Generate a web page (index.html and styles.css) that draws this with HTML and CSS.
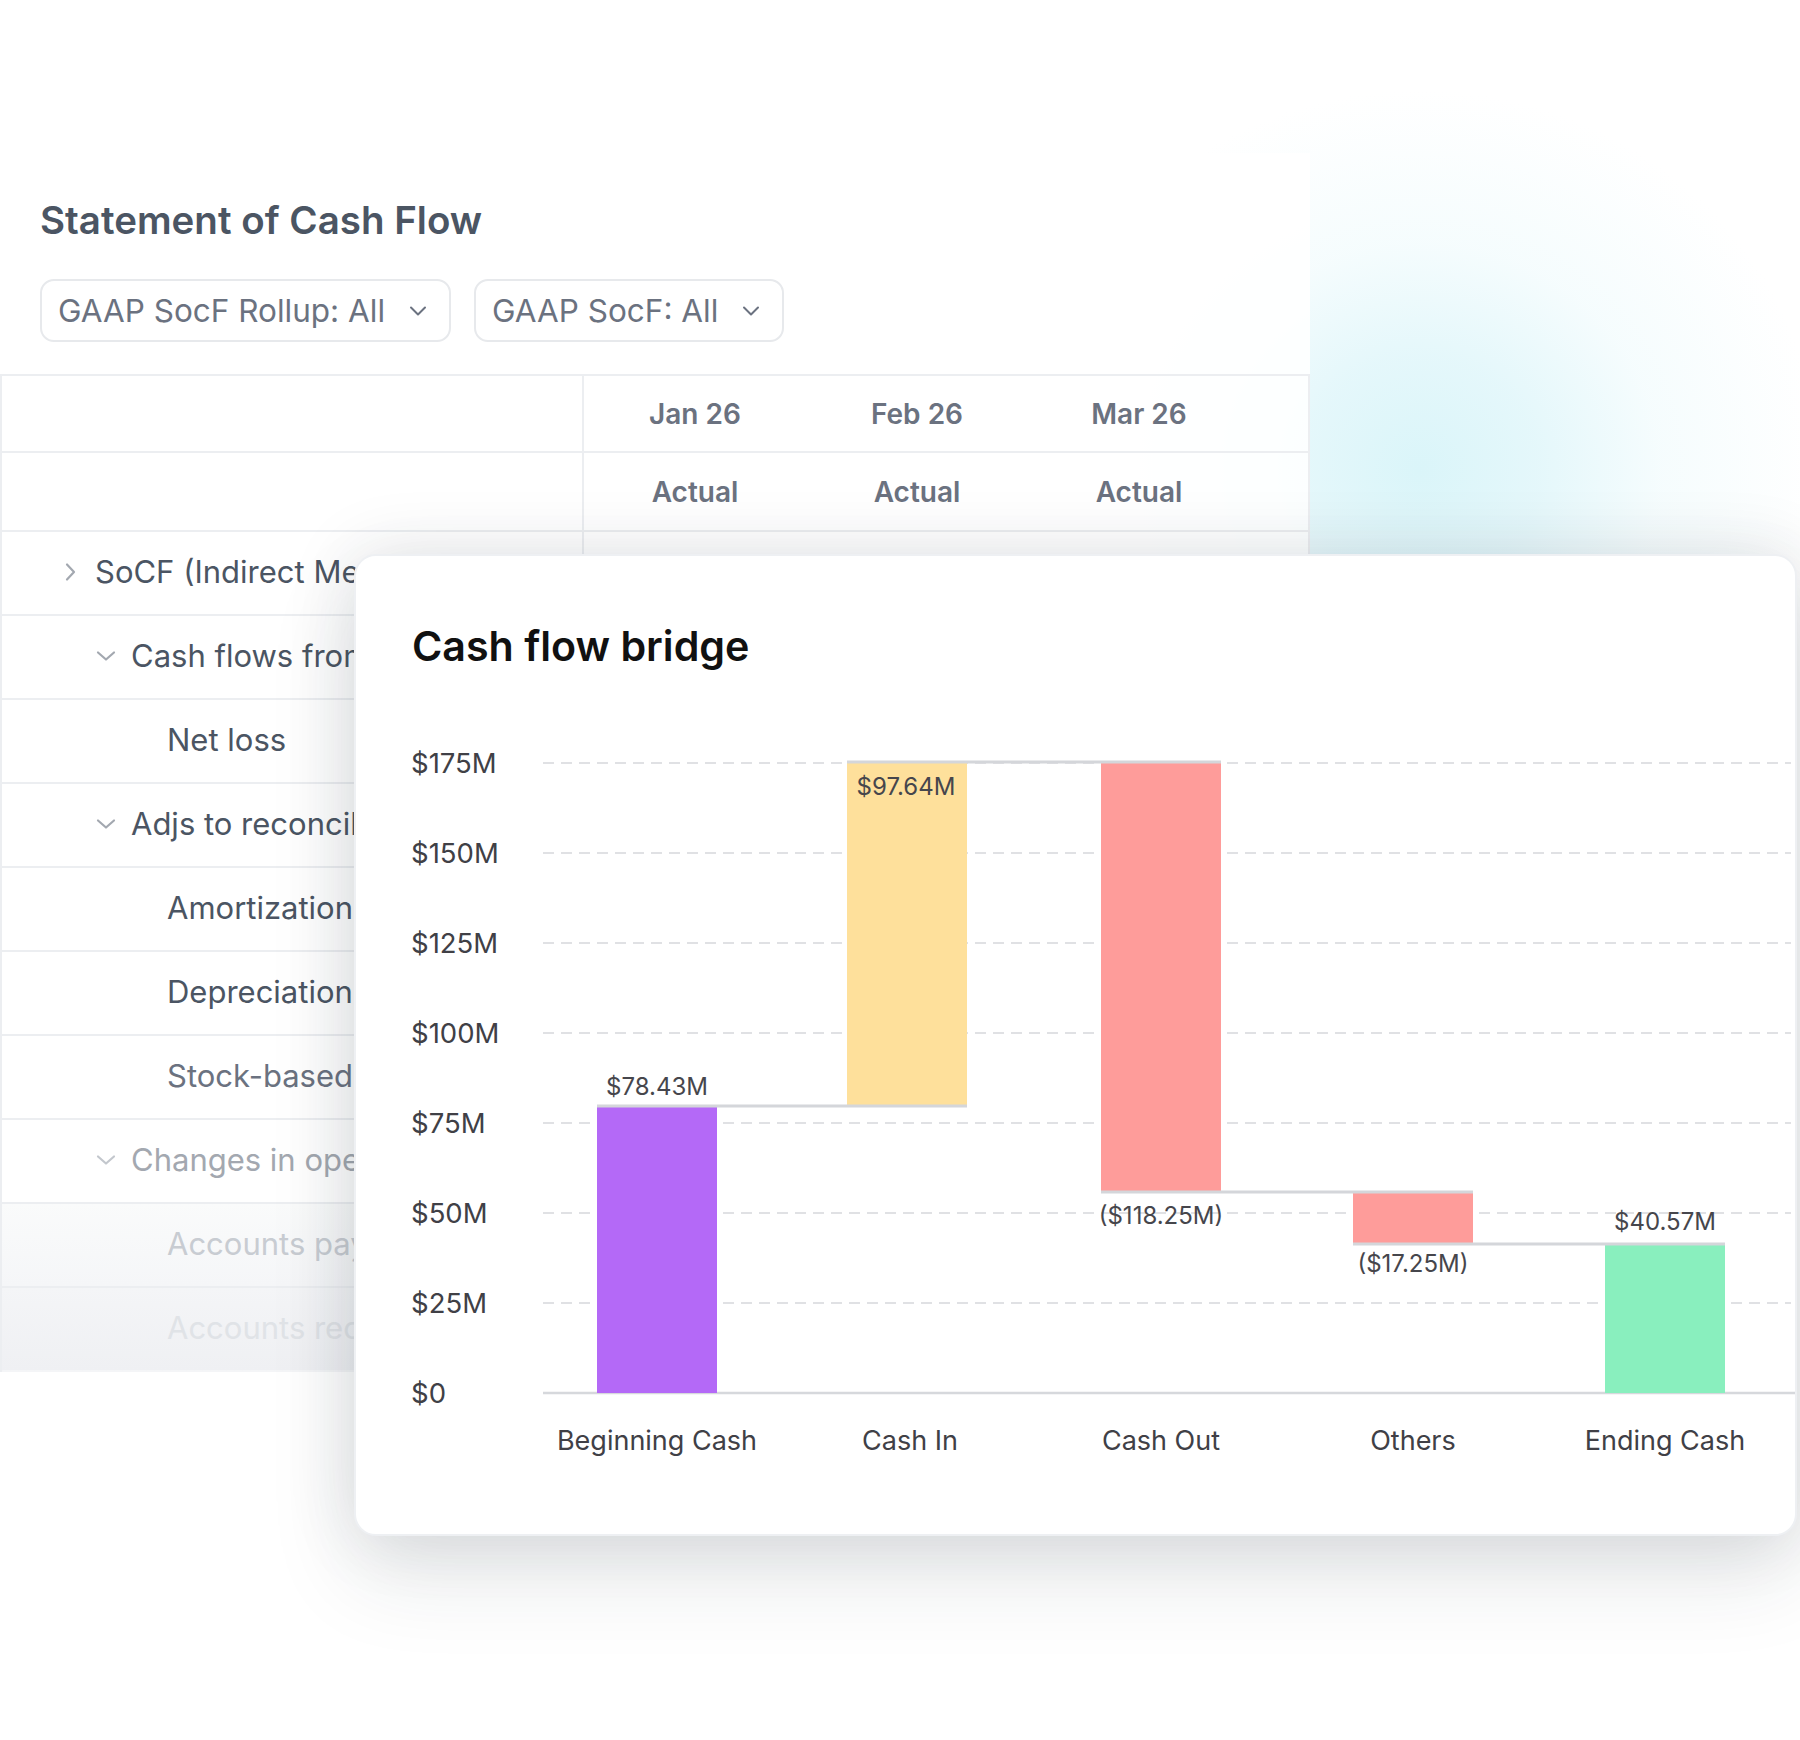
FILE: index.html
```html
<!DOCTYPE html>
<html lang="en">
<head>
<meta charset="utf-8">
<title>Statement of Cash Flow</title>
<link rel="stylesheet" href="styles.css">
</head>
<body>
<div class="stage">
  <div class="glow"></div>

  <section class="panel">
    <h1 class="title">Statement of Cash Flow</h1>
    <div class="filters">
      <div class="select">
        <span>GAAP SocF Rollup: All</span>
        <svg class="sel-chev" width="18" height="12" viewBox="0 0 18 12"><path d="M2 2.5 L9 9.5 L16 2.5" fill="none" stroke="#6b7280" stroke-width="2" stroke-linecap="round" stroke-linejoin="round"/></svg>
      </div>
      <div class="select">
        <span>GAAP SocF: All</span>
        <svg class="sel-chev" width="18" height="12" viewBox="0 0 18 12"><path d="M2 2.5 L9 9.5 L16 2.5" fill="none" stroke="#6b7280" stroke-width="2" stroke-linecap="round" stroke-linejoin="round"/></svg>
      </div>
    </div>

    <div class="table">
      <div class="row head1">
        <div class="cell label"></div>
        <div class="cell month">Jan 26</div>
        <div class="cell month">Feb 26</div>
        <div class="cell month">Mar 26</div>
        <div class="cell"></div>
      </div>
      <div class="row head2">
        <div class="cell label"></div>
        <div class="cell month">Actual</div>
        <div class="cell month">Actual</div>
        <div class="cell month">Actual</div>
        <div class="cell"></div>
      </div>

      <div class="row body">
        <div class="cell label lvl0">
          <svg class="chev" width="20" height="20" viewBox="0 0 20 20"><path d="M7 2.5 L14 10 L7 17.5" fill="none" stroke="#a3a8b0" stroke-width="2.2" stroke-linecap="round" stroke-linejoin="round"/></svg>
          <span>SoCF (Indirect Method)</span>
        </div>
        <div class="cell"></div><div class="cell"></div><div class="cell"></div><div class="cell"></div>
      </div>
      <div class="row body">
        <div class="cell label lvl1">
          <svg class="chev" width="20" height="20" viewBox="0 0 20 20"><path d="M2 6.5 L10 13.5 L18 6.5" fill="none" stroke="#a3a8b0" stroke-width="2.2" stroke-linecap="round" stroke-linejoin="round"/></svg>
          <span>Cash flows from operating activities</span>
        </div>
        <div class="cell"></div><div class="cell"></div><div class="cell"></div><div class="cell"></div>
      </div>
      <div class="row body">
        <div class="cell label lvl2"><span>Net loss</span></div>
        <div class="cell"></div><div class="cell"></div><div class="cell"></div><div class="cell"></div>
      </div>
      <div class="row body">
        <div class="cell label lvl1">
          <svg class="chev" width="20" height="20" viewBox="0 0 20 20"><path d="M2 6.5 L10 13.5 L18 6.5" fill="none" stroke="#a3a8b0" stroke-width="2.2" stroke-linecap="round" stroke-linejoin="round"/></svg>
          <span>Adjs to reconcile net loss</span>
        </div>
        <div class="cell"></div><div class="cell"></div><div class="cell"></div><div class="cell"></div>
      </div>
      <div class="row body">
        <div class="cell label lvl2"><span>Amortization</span></div>
        <div class="cell"></div><div class="cell"></div><div class="cell"></div><div class="cell"></div>
      </div>
      <div class="row body">
        <div class="cell label lvl2"><span>Depreciation</span></div>
        <div class="cell"></div><div class="cell"></div><div class="cell"></div><div class="cell"></div>
      </div>
      <div class="row body fade1">
        <div class="cell label lvl2"><span>Stock-based compensation</span></div>
        <div class="cell"></div><div class="cell"></div><div class="cell"></div><div class="cell"></div>
      </div>
      <div class="row body fade2">
        <div class="cell label lvl1">
          <svg class="chev" width="20" height="20" viewBox="0 0 20 20"><path d="M2 6.5 L10 13.5 L18 6.5" fill="none" stroke="#c3c7cd" stroke-width="2.2" stroke-linecap="round" stroke-linejoin="round"/></svg>
          <span>Changes in operating assets</span>
        </div>
        <div class="cell"></div><div class="cell"></div><div class="cell"></div><div class="cell"></div>
      </div>
      <div class="row body fade3">
        <div class="cell label lvl2"><span>Accounts payable</span></div>
        <div class="cell"></div><div class="cell"></div><div class="cell"></div><div class="cell"></div>
      </div>
      <div class="row body fade4">
        <div class="cell label lvl2"><span>Accounts receivable</span></div>
        <div class="cell"></div><div class="cell"></div><div class="cell"></div><div class="cell"></div>
      </div>
    </div>
  </section>

  <div class="card">
    <h2 class="card-title">Cash flow bridge</h2>
    <svg class="chart" width="1439" height="864" viewBox="2 116 1439 864">
      <g class="grid">
        <line x1="189" y1="209" x2="1437" y2="209"/>
        <line x1="189" y1="299" x2="1437" y2="299"/>
        <line x1="189" y1="389" x2="1437" y2="389"/>
        <line x1="189" y1="479" x2="1437" y2="479"/>
        <line x1="189" y1="569" x2="1437" y2="569"/>
        <line x1="189" y1="659" x2="1437" y2="659"/>
        <line x1="189" y1="749" x2="1437" y2="749"/>
      </g>
      <line class="axis" x1="189" y1="839" x2="1441" y2="839"/>

      <g class="ylabels">
        <text x="57" y="209">$175M</text>
        <text x="57" y="299">$150M</text>
        <text x="57" y="389">$125M</text>
        <text x="57" y="479">$100M</text>
        <text x="57" y="569">$75M</text>
        <text x="57" y="659">$50M</text>
        <text x="57" y="749">$25M</text>
        <text x="57" y="839">$0</text>
      </g>

      <rect class="bar-begin" x="243" y="553" width="120" height="286"/>
      <rect class="bar-in" x="493" y="209" width="120" height="344"/>
      <rect class="bar-out" x="747" y="209" width="120" height="428"/>
      <rect class="bar-out" x="999" y="637" width="120" height="52"/>
      <rect class="bar-end" x="1251" y="689" width="120" height="150"/>

      <g class="connect">
        <line x1="243" y1="552" x2="613" y2="552"/>
        <line x1="493" y1="208" x2="867" y2="208"/>
        <line x1="747" y1="638" x2="1119" y2="638"/>
        <line x1="999" y1="690" x2="1371" y2="690"/>
      </g>

      <g class="vlabels">
        <text x="303" y="532">$78.43M</text>
        <text x="552" y="232">$97.64M</text>
        <text x="807" y="661">($118.25M)</text>
        <text x="1059" y="709">($17.25M)</text>
        <text x="1311" y="667">$40.57M</text>
      </g>

      <g class="xlabels">
        <text x="303" y="886">Beginning Cash</text>
        <text x="556" y="886">Cash In</text>
        <text x="807" y="886">Cash Out</text>
        <text x="1059" y="886">Others</text>
        <text x="1311" y="886">Ending Cash</text>
      </g>
    </svg>
  </div>
</div>
</body>
</html>
```

FILE: styles.css
```css
* { box-sizing: border-box; }

html, body { margin: 0; padding: 0; }

body {
  width: 1800px;
  height: 1740px;
  overflow: hidden;
  background: #ffffff;
  font-family: Inter, "Noto Sans", "Liberation Sans", sans-serif;
}

.stage {
  position: relative;
  width: 1800px;
  height: 1740px;
  overflow: hidden;
}

/* soft cyan glow behind the panel */
.glow {
  position: absolute;
  left: 1000px;
  top: 20px;
  width: 800px;
  height: 640px;
  background: radial-gradient(ellipse 400px 380px at 420px 450px,
    rgba(218, 245, 249, 1) 0%,
    rgba(224, 246, 250, 0.85) 30%,
    rgba(236, 250, 252, 0.5) 60%,
    rgba(255, 255, 255, 0) 100%);
}

.panel {
  position: relative;
  margin-top: 153px;
  width: 1310px;
  padding-top: 44px;
  background: rgba(255, 255, 255, 0.88);
}

.title {
  margin: 0 0 0 40px;
  font-size: 38.5px;
  line-height: 46px;
  font-weight: 600;
  color: #4b5563;
}

.filters {
  display: flex;
  gap: 23px;
  margin: 36px 0 0 40px;
}

.select {
  height: 63px;
  display: flex;
  align-items: center;
  gap: 24px;
  padding: 0 22px 0 16px;
  border: 2px solid #e7e9ec;
  border-radius: 14px;
  font-size: 31.5px;
  color: #6b7280;
  background: #fff;
}

.sel-chev { display: block; flex: none; }

.table {
  margin-top: 32px;
  border-top: 2px solid #eceef1;
  border-left: 2px solid #eceef1;
  border-right: 2px solid #eceef1;
}

.row {
  display: grid;
  grid-template-columns: 582px 222px 222px 222px 1fr;
  border-bottom: 2px solid #eceef1;
}

.head1 { height: 77px; }
.head2 { height: 79px; }
.body { height: 84px; }

.cell {
  display: flex;
  align-items: center;
  min-width: 0;
}

.label {
  border-right: 2px solid #eceef1;
  white-space: nowrap;
  overflow: hidden;
  font-size: 31px;
  color: #4b5563;
  padding-bottom: 3px;
}

.month {
  justify-content: center;
  font-size: 28px;
  font-weight: 600;
  color: #6b7280;
}

.lvl0 { padding-left: 58px; gap: 15px; }
.lvl1 { padding-left: 94px; gap: 15px; }
.lvl2 { padding-left: 165px; }

.chev { display: block; flex: none; }

.fade1 .label { color: #6b7280; }
.fade2 .label { color: #a3a8b0; }
.fade3 { background: linear-gradient(#fafbfb, #f5f6f8); }
.fade3 .label { color: #c8ccd2; }
.fade4 { background: linear-gradient(#f4f5f7, #eff0f3); border-bottom-color: transparent; }
.fade4 .label { color: #e0e3e7; }

/* chart card over the table */
.card {
  position: absolute;
  left: 354px;
  top: 554px;
  width: 1443px;
  height: 982px;
  background: #ffffff;
  border: 2px solid #eef0f3;
  border-radius: 22px;
  box-shadow: 0 0 70px rgba(30, 41, 59, 0.12), 0 40px 90px rgba(30, 41, 59, 0.11);
  overflow: hidden;
}

.card-title {
  margin: 0;
  padding: 66px 0 0 56px;
  font-size: 41.2px;
  line-height: 48px;
  font-weight: 600;
  color: #111111;
}

.chart { display: block; }

.chart text {
  font-family: Inter, "Noto Sans", "Liberation Sans", sans-serif;
  dominant-baseline: central;
}

.grid line {
  stroke: #d6d8dc;
  stroke-width: 1.5;
  stroke-dasharray: 11 7;
}

.axis { stroke: #d6d8dc; stroke-width: 2.5; }

.ylabels text { font-size: 27.5px; fill: #404046; }

.xlabels text { font-size: 27px; fill: #404046; text-anchor: middle; }

.vlabels text { font-size: 24px; fill: #46464c; text-anchor: middle; }

.bar-begin { fill: #b469f7; }
.bar-in { fill: #fee09b; }
.bar-out { fill: #fe9c9a; }
.bar-end { fill: #89efbe; }

.connect line { stroke: #d4d6da; stroke-width: 3; }
```
